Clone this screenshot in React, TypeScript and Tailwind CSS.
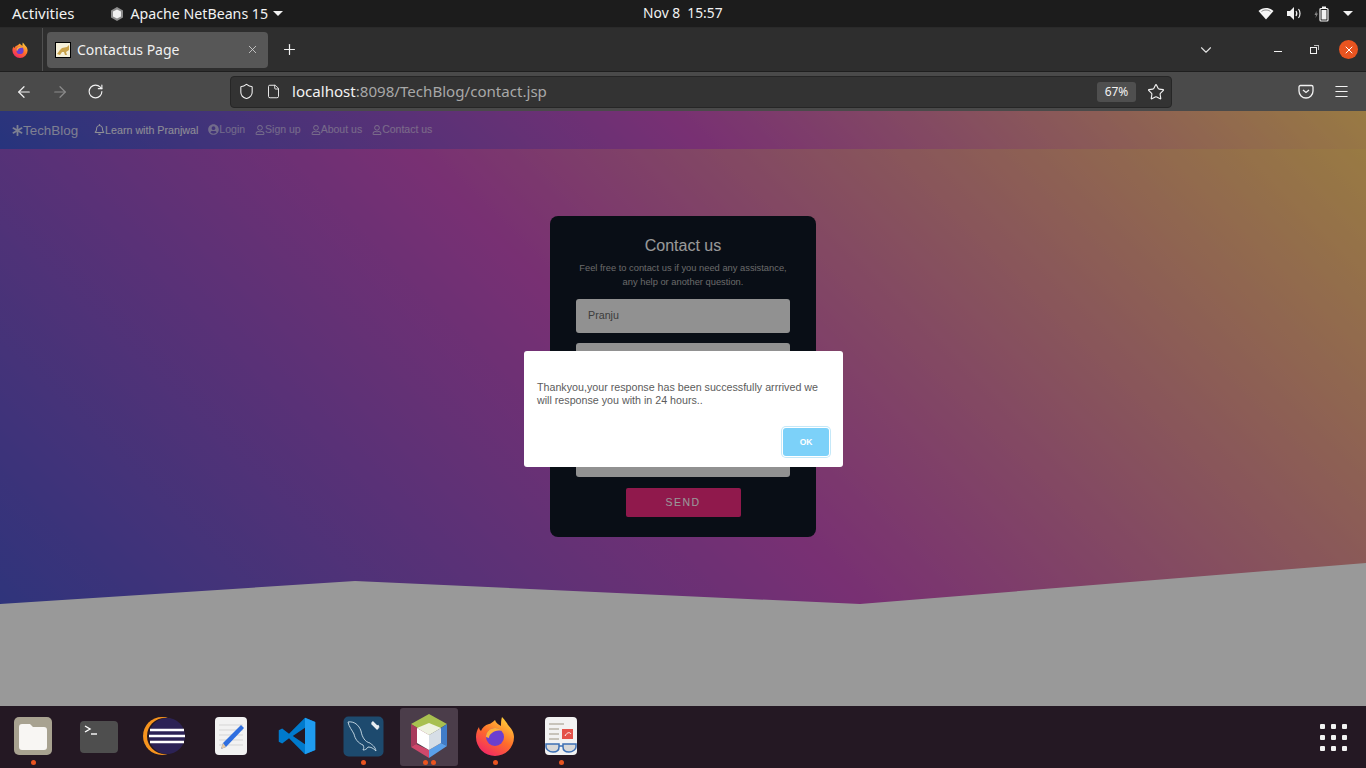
import React from "react";
import { ArrowLeft, ArrowRight, RotateCw, Shield, File, Star, Menu, X, Plus, ChevronDown } from "lucide-react";
import { FaAsterisk, FaRegBell, FaRegUser, FaUserCircle } from "react-icons/fa";

const Dot = ({ n = 1 }: { n?: number }) => (
  <div className="flex h-[5px] justify-center gap-[3px]">
    {Array.from({ length: n }).map((_, i) => (
      <span key={i} className="h-[5px] w-[5px] rounded-full bg-[#e95420]" />
    ))}
  </div>
);

const Files = () => (
  <svg width="40" height="40" viewBox="0 0 40 40"><rect x="1" y="1" width="38" height="38" rx="5" fill="#a8a290" /><path d="M6 11a3 3 0 0 1 3-3h8l3 3h11a3 3 0 0 1 3 3v17a3 3 0 0 1-3 3H9a3 3 0 0 1-3-3z" fill="#f8f6f3" /></svg>
);
const Terminal = () => (
  <svg width="40" height="40" viewBox="0 0 40 40"><rect x="1" y="5" width="38" height="32" rx="4" fill="#4e4e4e" /><path d="M6 10l5 3-5 3" stroke="#fff" strokeWidth="1.4" fill="none" /><path d="M12 18h6" stroke="#fff" strokeWidth="1.4" /></svg>
);
const Eclipse = () => (
  <svg width="44" height="40" viewBox="0 0 44 40"><circle cx="19" cy="20" r="19" fill="#f7941e" /><circle cx="22" cy="20" r="18" fill="#241823" /><circle cx="24" cy="20" r="18" fill="#2c2255" /><path d="M7 14h34M6 20h36M7 26h34" stroke="#fff" strokeWidth="2.600" /></svg>
);
const Editor = () => (
  <svg width="34" height="40" viewBox="0 0 34 40"><rect x="1" y="1" width="32" height="38" rx="4" fill="#f2f2f2" /><path d="M5 9h24M5 14h24M5 19h24M5 24h24M5 29h24" stroke="#d5d5d5" /><path d="M27 9l3 3-18 19-5 2 2-6z" fill="#2f6fe0" /><path d="M9 27l3 4-5 2z" fill="#e6c9a0" /></svg>
);
const VSCode = () => (
  <svg width="38" height="38" viewBox="0 0 100 100"><path d="M71 2L29 44 11 30 2 35v30l9 5 18-14 42 42 27-11V13z" fill="#007acc" /><path d="M71 2l27 11v74L71 98z" fill="#1f9cf0" /><path d="M71 28L39 50l32 22z" fill="#241823" /></svg>
);
const Workbench = () => (
  <svg width="41" height="41" viewBox="0 0 41 41"><rect x="0.500" y="0.500" width="40" height="40" rx="5" fill="#1d4a6e" /><path d="M5 6c6-1 11 3 13 9 1 6 4 11 9 12 2 2 5 3 6 8-3-3-5-4-8-4-1 2-3 3-5 3 1-2 1-3 0-5-5-2-8-6-9-11-2-4-5-7-6-12z" fill="none" stroke="#cfe0ea" strokeWidth="0.900" /><path d="M29 6l5 5 2-1" stroke="#e8eef2" strokeWidth="2.600" fill="none" /><path d="M35 13l-6-6" stroke="#e8eef2" strokeWidth="2.600" /></svg>
);
const NetBeans = () => (
  <svg width="40" height="44" viewBox="0 0 40 44"><path d="M20 0l18 10-18 11L2 10z" fill="#a8c050" /><path d="M2 10l18 11v1L7 30 2 33z" fill="#a83a5c" /><path d="M2 33l5-3 13 6v8z" fill="#d0486c" /><path d="M38 10v22l-6-3V14z" fill="#3f7cc8" /><path d="M38 32l-18 12v-8l12-7z" fill="#5aa0ea" /><path d="M20 9l12 5-12 7-12-7z" fill="#eef2e0" /><path d="M8 14l12 7v15L8 29z" fill="#fff" /><path d="M32 14v15l-12 7V21z" fill="#d6dee6" /></svg>
);
const Firefox = ({ s = 40, id = "ffa" }: { s?: number; id?: string }) => (
  <svg width={s} height={s} viewBox="0 0 40 40">
    <defs><linearGradient id={id} x1="0.800" y1="0" x2="0.200" y2="1"><stop offset="0" stopColor="#ffd53a" /><stop offset="0.500" stopColor="#ff6d2a" /><stop offset="1" stopColor="#f0216a" /></linearGradient></defs>
    <path d="M20 4c1 3 3 4 6 6 0-3 0-6 1-9 3 3 5 6 6 8 3 3 6 7 6 12a19 19 0 1 1-38 0c0-4 1-7 3-10 0 2 1 3 2 4 1-3 4-6 8-7 1 0 4-2 6-4z" fill={`url(#${id})`} />
    <circle cx="20" cy="21" r="9" fill="#6b3fd0" />
    <path d="M11 21c0-5 4-9 9-9 3 0 5 1 7 3-4-1-8 0-10 2-2 1-3 3-3 5z" fill="#ffb13a" />
  </svg>
);
const Reader = () => (
  <svg width="34" height="40" viewBox="0 0 34 40"><rect x="1" y="1" width="32" height="38" rx="4" fill="#f2f2f2" /><path d="M5 8h15M5 13h10M5 18h10M5 23h10" stroke="#b9b4a8" strokeWidth="1.500" /><rect x="18" y="13" width="11" height="10" fill="#e4524a" /><path d="M21 20c2-4 5-4 6-2" stroke="#fff" fill="none" /><path d="M2 28h13v3c0 3-2 5-6 5s-7-3-7-5z" fill="#d8d8d8" stroke="#3c6fb4" strokeWidth="1.500" /><path d="M19 28h13v3c0 2-3 5-7 5s-6-2-6-5z" fill="#d8d8d8" stroke="#3c6fb4" strokeWidth="1.500" /><path d="M15 30h4" stroke="#3c6fb4" strokeWidth="1.500" /></svg>
);

const DockItem = ({ children, dots = 0, x }: { children: React.ReactNode; dots?: number; x: string }) => (
  <div className={`flex h-[58px] w-[58px] flex-col items-center justify-end rounded-[3px] pb-[1px] ${x}`}>
    <div className="flex h-[48px] items-center justify-center">{children}</div>
    <div className="h-[5px]">{dots > 0 && <Dot n={dots} />}</div>
  </div>
);

const NavLink = ({ icon, label, strong }: { icon: React.ReactNode; label: string; strong?: boolean }) => (
  <span className={`flex items-center ${strong ? "text-[10.7px] text-white/90" : "text-[10.5px] text-white/55"}`}>
    {icon}
    {label}
  </span>
);

const Fld = ({ children, cls }: { children?: React.ReactNode; cls: string }) => (
  <div className={`flex w-[214px] items-center rounded-[3px] bg-[#f2f2f2] pb-[2px] pl-[12px] text-[10.7px] text-[#666] ${cls}`}>{children}</div>
);

export default function App() {
  return (
    <div className="flex h-[768px] w-[1366px] flex-col overflow-hidden bg-black font-['Noto_Sans',sans-serif]">
      {/* GNOME top bar */}
      <div className="flex h-[27px] items-center bg-[#1c1c1c] text-[#f2f2f2]">
        <span className="ml-[12px] text-[15px]">Activities</span>
        <svg className="ml-[34px]" width="16" height="16" viewBox="0 0 16 16"><path d="M8 1l6 3.500v7L8 15l-6-3.500v-7z" fill="#8d8d8d" /><path d="M8 3.500l4 2v5l-4 2-4-2v-5z" fill="#f0f0f0" /></svg>
        <span className="ml-[6px] text-[14.200px]">Apache NetBeans 15</span>
        <span className="ml-[5px] h-0 w-0 border-x-[5px] border-t-[5px] border-x-transparent border-t-[#f2f2f2]" />
        <span className="ml-[360px] w-[80px] whitespace-nowrap text-[13.800px]">Nov 8&nbsp;&nbsp;15:57</span>
        <div className="ml-auto mr-[13px] flex items-center">
          <svg width="16" height="13" viewBox="0 0 16 13"><path d="M8 12.500L0.500 4C4.500 0 11.500 0 15.500 4z" fill="#f5f5f5" /><path d="M3.500 4.500C6 2.500 10 2.500 12.500 4.500" stroke="#1c1c1c" strokeOpacity="0.500" fill="none" /></svg>
          <svg className="ml-[12px]" width="16" height="15" viewBox="0 0 16 15"><path d="M1 5h3l4-4v13l-4-4H1z" fill="#f2f2f2" /><path d="M10 5c1 1.500 1 3.500 0 5M12.500 3c2 2.500 2 6.500 0 9" stroke="#f2f2f2" strokeWidth="1.200" fill="none" /></svg>
          <svg className="ml-[12px]" width="16" height="16" viewBox="0 0 16 16"><path d="M2.500 5L0.500 9h1.500l-.5 3 2.500-4.500H2.500z" fill="#888" /><rect x="6" y="2.500" width="8" height="12.500" rx="1" fill="none" stroke="#f2f2f2" strokeWidth="1.200" /><rect x="8" y="0.500" width="4" height="2" fill="#f2f2f2" /><rect x="7.500" y="4" width="5" height="9.500" fill="#f2f2f2" /></svg>
          <span className="ml-[13px] h-0 w-0 border-x-[5px] border-t-[5px] border-x-transparent border-t-[#f2f2f2]" />
        </div>
      </div>

      {/* Tab strip */}
      <div className="flex h-[44px] items-center border-t border-[#2a2a2a] bg-[#2e2e2e]">
        <div className="flex h-full w-[43px] items-center justify-center border-r border-[#505050] pr-[3px]">
          <Firefox s={16} id="ffb" />
        </div>
        <div className="ml-[4px] flex h-[36px] w-[221px] items-center rounded-[4px] bg-[#575757] pl-[8px] pr-[9px] text-[14px] text-[#f0f0f0]">
          <span className="flex h-[16px] w-[16px] items-center justify-center border border-black bg-[#f4efd8]">
            <svg width="14" height="14" viewBox="0 0 14 14"><path d="M1 11l3-4 2-2 5-1 2-2v5l-3 2 1 3H9L8 9H6l-2 3z" fill="#c9a24a" /></svg>
          </span>
          <span className="ml-[6px]">Contactus Page</span>
          <X size={13} strokeWidth={1.500} className="ml-auto text-[#d8d8d8]" />
        </div>
        <Plus size={17} strokeWidth={1.700} className="ml-[13px] text-[#f2f2f2]" />
        <ChevronDown size={18} strokeWidth={1.500} className="ml-[899px] text-[#e0e0e0]" />
        <span className="ml-[59px] mt-[3px] h-[1px] w-[8px] bg-[#f2f2f2]" />
        <span className="relative ml-[28px] mt-[1px] h-[7px] w-[7px] border border-[#f2f2f2]">
          <span className="absolute -right-[3px] -top-[3px] h-[5px] w-[5px] border-r border-t border-[#bbbbbb]" />
        </span>
        <span className="ml-[22px] flex h-[19px] w-[19px] items-center justify-center rounded-full bg-[#e95420]">
          <X size={12} strokeWidth={2} className="text-white" />
        </span>
      </div>

      {/* Firefox toolbar */}
      <div className="flex h-[40px] items-center border-t border-[#1f1f1f] bg-[#4a4a4a] text-[#f2f2f2]">
        <ArrowLeft size={18} strokeWidth={1.600} className="ml-[15px]" />
        <ArrowRight size={18} strokeWidth={1.600} className="ml-[18px] text-[#8c8c8c]" />
        <RotateCw size={17} strokeWidth={1.600} className="ml-[18px]" />
        <div className="ml-[126px] flex h-[32px] w-[942px] items-center rounded-[4px] border border-[#262626] bg-[#333333]">
          <Shield size={17} strokeWidth={1.500} className="ml-[7px]" />
          <File size={15} strokeWidth={1.500} className="ml-[11px]" />
          <span className="ml-[11px] text-[15.100px] text-[#f2f2f2]">localhost<span className="text-[#a8a8a8]">:8098/TechBlog/contact.jsp</span></span>
          <span className="ml-auto flex h-[20px] w-[39px] items-center justify-center rounded-[3px] bg-[#4f4f4f] text-[12px]">67%</span>
          <Star size={18} strokeWidth={1.500} className="ml-[11px] mr-[6px]" />
        </div>
        <svg className="ml-[126px]" width="16" height="15" viewBox="0 0 16 15"><path d="M2.500 1.500h11a1.500 1.500 0 0 1 1.500 1.500v4a7 7 0 0 1-14 0V3a1.500 1.500 0 0 1 1.500-1.500z" fill="none" stroke="#f2f2f2" strokeWidth="1.300" /><path d="M5 6l3 2.500L11 6" fill="none" stroke="#f2f2f2" strokeWidth="1.300" /></svg>
        <Menu size={17} strokeWidth={1.500} className="ml-[19px]" />
      </div>

      {/* Page */}
      <div className="relative flex h-[595px] flex-col">
        <div className="flex h-[38px] items-center bg-[linear-gradient(45deg,#4158d0_0%,#c850c0_50%,#ffcc70_100%)] pl-[12px] font-['Liberation_Sans',sans-serif]">
          <span className="flex items-center pt-[2px] text-[13.400px] text-white/75"><FaAsterisk size={11} />TechBlog</span>
          <div className="ml-[16px] flex items-center gap-[10px]">
            <NavLink strong icon={<FaRegBell size={11} />} label="Learn with Pranjwal" />
            <NavLink icon={<FaUserCircle size={11} />} label="Login" />
            <NavLink icon={<FaRegUser size={10} />} label="Sign up" />
            <NavLink icon={<FaRegUser size={10} />} label="About us" />
            <NavLink icon={<FaRegUser size={10} />} label="Contact us" />
          </div>
        </div>

        <div className="relative flex flex-1 flex-col items-center bg-[linear-gradient(45deg,#4158d0_0%,#c850c0_50%,#ffcc70_100%)] font-['Liberation_Sans',sans-serif]">
          <svg className="absolute inset-x-0 bottom-0" width="1366" height="143" viewBox="0 0 1366 143"><path d="M0 41L355 18 860 41 1366 0V143H0z" fill="#ffffff" /></svg>
          <div className="relative mt-[67px] flex h-[321px] w-[266px] flex-col items-center rounded-[8px] bg-[#101826]">
            <div className="mt-[20px] text-[16px] leading-[19px] text-[#fff]">Contact us</div>
            <div className="mt-[6px] text-center text-[9.330px] leading-[14px] text-[#b0b0b0]">Feel free to contact us if you need any assistance,<br />any help or another question.</div>
            <Fld cls="mt-[10px] h-[34px]">Pranju</Fld>
            <Fld cls="mt-[10px] h-[34px]" />
            <Fld cls="mt-[10px] h-[90px]" />
            <button className="mt-[11px] h-[29px] w-[115px] rounded-[2px] bg-[#f02a7f] text-[10.500px] tracking-[1.400px] text-[#fff]">SEND</button>
          </div>
        </div>

        {/* Dim overlay */}
        <div className="absolute inset-0 bg-black/40" />

        {/* Alert */}
        <div className="absolute left-[524px] top-[240px] h-[116px] w-[319px] rounded-[3px] bg-white font-['Liberation_Sans',sans-serif]">
          <p className="ml-[13px] mt-[30px] w-[290px] text-[10.700px] leading-[13px] text-[#5c5c5c]">Thankyou,your response has been successfully arrrived we will response you with in 24 hours..</p>
          <button className="absolute bottom-[11px] right-[14px] h-[28px] w-[46px] rounded-[3px] bg-[#7cd1f9] text-[8.500px] font-bold text-white shadow-[0_0_0_1px_#fff,0_0_0_2px_#c5e8f8]">OK</button>
        </div>
      </div>

      {/* Dock */}
      <div className="flex h-[62px] items-center bg-[#241823] pl-[4px] pr-[19px]">
        <DockItem dots={1} x="ml-0"><Files /></DockItem>
        <DockItem x="ml-[8px]"><Terminal /></DockItem>
        <DockItem x="ml-[8px]"><Eclipse /></DockItem>
        <DockItem x="ml-[8px]"><Editor /></DockItem>
        <DockItem x="ml-[8px]"><VSCode /></DockItem>
        <DockItem dots={1} x="ml-[8px]"><Workbench /></DockItem>
        <DockItem dots={2} x="ml-[8px] bg-[#4b3d4a]"><NetBeans /></DockItem>
        <DockItem dots={1} x="ml-[8px]"><Firefox /></DockItem>
        <DockItem dots={1} x="ml-[8px]"><Reader /></DockItem>
        <div className="ml-auto grid grid-cols-3 gap-[6px]">
          {Array.from({ length: 9 }).map((_, i) => (
            <span key={i} className="h-[5px] w-[5px] rounded-[1px] bg-[#f2f2f2]" />
          ))}
        </div>
      </div>
    </div>
  );
}
